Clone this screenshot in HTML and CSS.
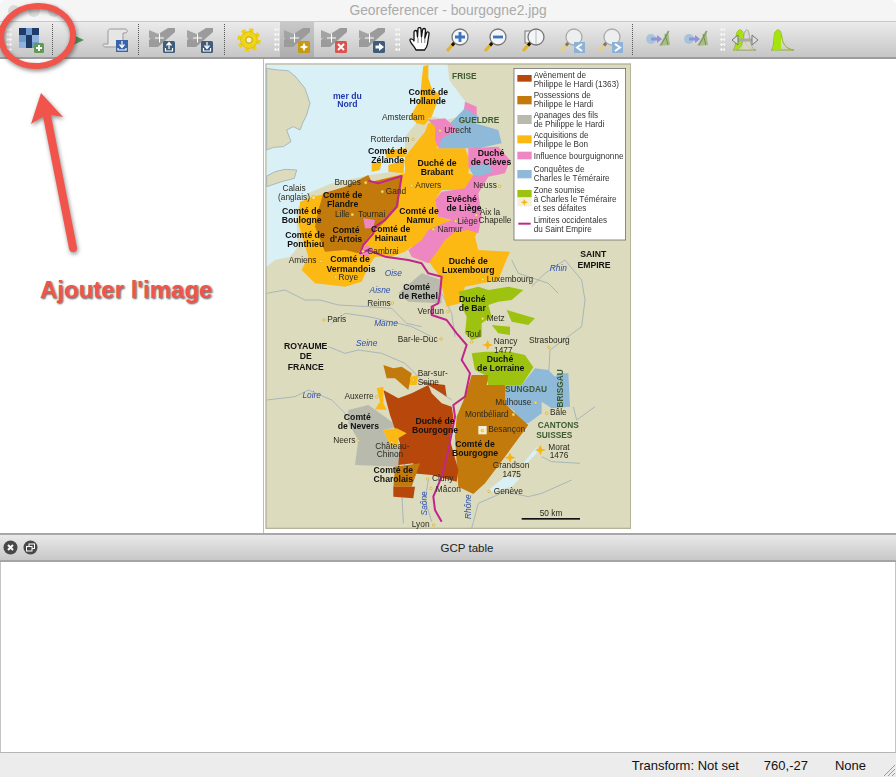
FILE: index.html
```html
<!DOCTYPE html>
<html lang="en">
<head>
    <meta charset="UTF-8">
    <title>Georeferencer - bourgogne2.jpg</title>
    <link rel="stylesheet" href="styles.css">
</head>
<body>

<svg class="defs" width="0" height="0">
    <symbol id="gcp" viewBox="0 0 26 26">
        <polygon points="0,20 0,13 19,1 26,1 26,5 9,20" fill="#9b9b9b"/>
        <polygon points="0,3 14,9 7,14 0,11" fill="#a3a3a3"/>
        <path d="M10.5 6.5v9M6 11h9" stroke="#fff" stroke-width="1"/>
    </symbol>
    <symbol id="lens" viewBox="0 0 26 26">
        <path d="M2 24l7-8" stroke="#e2b52c" stroke-width="3.4"/>
        <path d="M7 18.500l3-3.500" stroke="#111" stroke-width="3"/>
        <circle cx="15" cy="10" r="8" fill="#f3f5f8" stroke="#777" stroke-width="1.300"/>
    </symbol>
    <symbol id="lens-dim" viewBox="0 0 26 26">
        <path d="M2 24l7-8" stroke="#e6cf85" stroke-width="3.4"/>
        <path d="M7 18.500l3-3.500" stroke="#777" stroke-width="3"/>
        <circle cx="15" cy="10" r="8" fill="#eceef0" stroke="#aaa" stroke-width="1.300"/>
    </symbol>
    <symbol id="scale" viewBox="0 0 26 26">
        <circle cx="6" cy="12" r="5" fill="#a9c4d8"/>
        <path d="M6 12h8" stroke="#8f92dc" stroke-width="3"/>
        <polygon points="12,8 17,12 12,16" fill="#8f92dc"/>
        <polygon points="23,3 25,18 14,19" fill="#a9bd84"/>
        <path d="M24 4l-8 14M20 7l3 11" stroke="#6f8f5a" stroke-width="1"/>
    </symbol>
    <symbol id="hist" viewBox="0 0 26 26">
        <path d="M1 23c2-1 2-3 3-10 0-6 1-10 4-10 3 0 3 3 4 8 1 6 4 11 12 12z" fill="none" stroke="#8fb01c" stroke-width="1"/>
        <path d="M2 23c1-1 2-3 2-10 0-6 1-10 4-10 2 0 3 2 3 6v14z" fill="#a4e30c"/>
    </symbol>
</svg>

<div class="window">
    <div class="titlebar">
        <span class="light"></span><span class="light"></span><span class="light"></span>
        <span class="wintitle">Georeferencer - bourgogne2.jpg</span>
    </div>

    <div class="toolbar">
        <span class="grip"></span>
        <span class="tool">
            <svg width="28" height="26" viewBox="0 0 28 26">
                <rect x="2" y="1" width="20" height="20" fill="#6e9ace"/>
                <rect x="2" y="1" width="7" height="7" fill="#1f3a66"/>
                <rect x="15" y="1" width="7" height="7" fill="#1f3a66"/>
                <rect x="9" y="8" width="6" height="7" fill="#1f3a66"/>
                <rect x="2" y="15" width="7" height="6" fill="#8fb2dc"/>
                <rect x="9" y="15" width="6" height="6" fill="#1f3a66"/>
                <rect x="15" y="8" width="7" height="7" fill="#8fb2dc"/>
                <rect x="17" y="16" width="10" height="10" rx="1.500" fill="#5f9b52"/>
                <path d="M22 18v6M19 21h6" stroke="#fff" stroke-width="2"/>
            </svg>
        </span>
        <span class="sep sep-first"></span>
        <span class="tool">
            <svg width="16" height="14" viewBox="0 0 16 14"><polygon points="2,1 15,7 2,13" fill="#4c9150"/></svg>
        </span>
        <span class="tool">
            <svg width="26" height="24" viewBox="0 0 26 24">
                <path d="M6 4c0-3 2-3 3-3h14c3 0 3 4 0 4h-2v14H4c-4 0-4-3-1-3h3z" fill="#e6e6e6" stroke="#999"/>
                <rect x="14" y="12" width="12" height="12" fill="#3a64a8"/>
                <path d="M20 13v6M17.500 16.500l2.500 3 2.500-3M16 20v2h8v-2" stroke="#fff" stroke-width="1.200" fill="none"/>
            </svg>
        </span>
        <span class="sep"></span>
        <span class="tool">
            <svg width="26" height="26" viewBox="0 0 26 26">
                <use href="#gcp"/>
                <rect x="14" y="14" width="12" height="12" rx="1.500" fill="#3f5d7b"/>
                <path d="M20 22v-6M17.500 18.500l2.500-3 2.500 3M16.500 21v3h7v-3" stroke="#fff" stroke-width="1.200" fill="none"/>
            </svg>
        </span>
        <span class="tool">
            <svg width="26" height="26" viewBox="0 0 26 26">
                <use href="#gcp"/>
                <rect x="14" y="14" width="12" height="12" rx="1.500" fill="#3f5d7b"/>
                <path d="M20 15v6M17.500 18.500l2.500 3 2.500-3M16.500 21v3h7v-3" stroke="#fff" stroke-width="1.200" fill="none"/>
            </svg>
        </span>
        <span class="sep sep-wide"></span>
        <span class="tool">
            <svg width="24" height="24" viewBox="0 0 24 24">
                <circle cx="12" cy="12" r="9.500" fill="none" stroke="#ecd012" stroke-width="4.400" stroke-dasharray="3.900 3.560"/>
                <circle cx="12" cy="12" r="8.400" fill="#efd614" stroke="#dba90c" stroke-width=".6"/>
                <circle cx="12" cy="12" r="3.200" fill="#fdf8cf" stroke="#c8970e"/>
            </svg>
        </span>
        <span class="grip grip-gear"></span>
        <span class="tool tool-active">
            <svg width="26" height="26" viewBox="0 0 26 26">
                <use href="#gcp"/>
                <rect x="14" y="14" width="12" height="12" rx="1.500" fill="#c79a14"/>
                <polygon points="20,15.500 21.300,18.700 24.500,20 21.300,21.300 20,24.500 18.700,21.300 15.500,20 18.700,18.700" fill="#fff"/>
            </svg>
        </span>
        <span class="tool tool-next">
            <svg width="26" height="26" viewBox="0 0 26 26">
                <use href="#gcp"/>
                <rect x="14" y="14" width="12" height="12" rx="1.500" fill="#d9534f"/>
                <path d="M17 17l6 6M23 17l-6 6" stroke="#fff" stroke-width="2"/>
            </svg>
        </span>
        <span class="tool">
            <svg width="26" height="26" viewBox="0 0 26 26">
                <use href="#gcp"/>
                <rect x="14" y="14" width="12" height="12" rx="1.500" fill="#3f5d7b"/>
                <path d="M16.500 20h5" stroke="#fff" stroke-width="3"/>
                <polygon points="20,16 25,20 20,24" fill="#fff"/>
            </svg>
        </span>
        <span class="grip grip-hand"></span>
        <span class="tool">
            <svg width="24" height="25" viewBox="0 0 24 25">
                <path d="M8 23c-1-3-6-7-6-10 0-2 3-1 4 1L6 5c0-2 3-2 3 0l.5 5 .5-8c0-2 3-2 3 0l.5 8 1-7c.3-2 3-2 3 0l-.7 8 1.700-5c.6-2 3-1 2.500 1l-1.500 10c-.5 3-2 5-3 6z" fill="#fff" stroke="#111" stroke-width="1.300" stroke-linejoin="round"/>
                <path d="M10 11v5M13.500 11v5M16.800 11v5" stroke="#555" stroke-width=".7"/>
            </svg>
        </span>
        <span class="tool">
            <svg width="26" height="26" viewBox="0 0 26 26">
                <use href="#lens"/>
                <path d="M15 5v10M10 10h10" stroke="#3f74b8" stroke-width="2.800"/>
            </svg>
        </span>
        <span class="tool">
            <svg width="26" height="26" viewBox="0 0 26 26">
                <use href="#lens"/>
                <path d="M10 10h10" stroke="#3f74b8" stroke-width="2.800"/>
            </svg>
        </span>
        <span class="tool">
            <svg width="26" height="26" viewBox="0 0 26 26">
                <rect x="4" y="4" width="13" height="12" fill="#f0f0f0" stroke="#777"/>
                <use href="#lens"/>
                <path d="M15 3v14" stroke="#bbb"/>
            </svg>
        </span>
        <span class="tool">
            <svg width="26" height="26" viewBox="0 0 26 26">
                <use href="#lens-dim"/>
                <rect x="15" y="15" width="11" height="11" fill="#8db2d6"/>
                <path d="M23 17l-5 3.500 5 3.500" stroke="#fff" stroke-width="2" fill="none"/>
            </svg>
        </span>
        <span class="tool">
            <svg width="26" height="26" viewBox="0 0 26 26">
                <use href="#lens-dim"/>
                <rect x="15" y="15" width="11" height="11" fill="#8db2d6"/>
                <path d="M18 17l5 3.500-5 3.500" stroke="#fff" stroke-width="2" fill="none"/>
            </svg>
        </span>
        <span class="sep sep-scale"></span>
        <span class="tool"><svg width="26" height="26" viewBox="0 0 26 26"><use href="#scale"/></svg></span>
        <span class="tool"><svg width="26" height="26" viewBox="0 0 26 26"><use href="#scale"/></svg></span>
        <span class="grip grip-hist"></span>
        <span class="tool">
            <svg width="26" height="26" viewBox="0 0 26 26">
                <use href="#hist"/>
                <path d="M15 3c-3 0-3 6-4 10-1 5-3 9-7 10h20c-4-1-5-5-6-10-1-5-1-10-3-10z" fill="#d8d8c8" fill-opacity=".7" stroke="#a8a898"/>
                <path d="M4 13h18" stroke="#aaa" stroke-width="3"/>
                <polygon points="0,13 6,8 6,18" fill="#ddd" stroke="#777"/>
                <polygon points="26,13 20,8 20,18" fill="#ddd" stroke="#777"/>
            </svg>
        </span>
        <span class="tool"><svg width="26" height="26" viewBox="0 0 26 26"><use href="#hist"/></svg></span>
    </div>

    <div class="canvas">
        <div class="side"></div>
        <div class="map-pane">
            <svg class="map" width="366" height="469" viewBox="0 0 1098 1407">
                <rect x="3" y="12" width="1094" height="1393" fill="#dddbbd" stroke="#b5b398" stroke-width="4"/>

                <polygon class="sea" points="5,14 548,14 553,60 575,90 605,130 585,170 540,180 510,170 470,170 420,230 420,330 315,345 200,370 130,400 95,450 95,500 100,560 75,590 30,600 5,620"/>
                <polygon class="shore" points="5,25 40,30 70,32 90,48 120,85 135,130 125,165 115,185 105,210 85,200 65,210 78,245 55,260 25,262 5,270"/>
                <polygon class="shore" points="5,348 30,335 60,328 95,330 88,355 50,365 5,380"/>

                <polyline class="river" points="5,700 60,690 120,720 165,720 220,735 310,740 380,745 425,790 470,800"/>
                <polyline class="river" points="200,790 240,760 310,770 400,790 440,800 500,830"/>
                <polyline class="river" points="190,860 240,880 280,870 350,880 420,910 470,960 560,1020"/>
                <polyline class="river" points="5,1020 90,1010 130,990 200,1020 240,1060 270,1100"/>
                <polyline class="river" points="420,1200 410,1290 415,1390"/>
                <polyline class="river" points="490,1260 480,1320 500,1385"/>
                <polyline class="river" points="620,1405 640,1330 720,1295 790,1310 830,1300 920,1260"/>
                <polyline class="river" points="830,1190 860,1205 945,1210"/>
                <polyline class="river" points="925,1040 935,1080 990,1040"/>
                <polyline class="river" points="800,680 840,640 900,600 950,660 960,720 950,800 855,870 850,960"/>
                <polyline class="river" points="740,600 760,640 850,670 880,700"/>
                <polyline class="river" points="530,700 560,760 570,830"/>

                <polygon class="yellow" points="475,18 490,15 490,55 500,85 525,105 500,170 478,195 455,190 435,170 465,120 470,60"/>
                <polygon class="yellow" points="490,190 520,180 530,210 515,265 600,265 615,300 610,340 640,350 600,390 530,390 510,420 520,470 555,480 600,470 640,510 630,530 640,570 735,575 720,610 700,660 600,680 585,730 545,740 535,700 525,650 495,610 440,590 440,560 420,575 380,590 330,590 310,620 290,665 240,680 150,670 110,630 130,590 100,490 105,425 145,410 420,340 420,290 480,215"/>
                <polygon class="yellow" points="320,310 350,305 345,330 320,335"/>
                <polygon class="yellow" points="360,270 425,265 420,290 365,295"/>
                <polygon class="yellow" points="370,315 420,300 415,340 370,335"/>
                <polygon class="brown" points="175,400 240,380 310,345 320,365 410,345 400,440 355,490 320,520 300,545 280,580 240,570 180,575 150,500 160,450"/>
                <polygon class="pink" points="490,180 540,175 580,210 540,235 520,265 510,240 510,200"/>
                <polygon class="pink" points="600,125 635,140 635,180 625,210 590,200"/>
                <polygon class="blue" points="600,145 640,170 630,190 700,210 710,250 640,265 600,265 520,265 530,235 580,210 555,190"/>
                <polygon class="pink" points="610,265 700,260 735,300 720,340 670,350 640,400 650,470 640,520 610,510 570,515 540,540 520,570 490,610 440,590 430,570 470,540 490,510 510,500 560,480 520,470 510,420 530,395 600,385 625,345 610,320"/>
                <polygon class="blue" points="612,320 670,310 685,335 640,350 625,345"/>
                <polygon class="pink" points="295,475 330,480 325,505 300,505"/>
                <polygon class="pink" points="285,570 305,555 325,565 310,590 285,585"/>

                <polygon class="gray" points="400,700 470,640 530,660 530,730 430,725"/>
                <polygon class="green" points="580,695 640,680 670,690 730,680 775,690 740,720 700,725 670,735 680,770 650,790 650,830 620,840 600,820 605,770 590,740 590,715"/>
                <polygon class="green" points="725,750 810,775 790,795 740,785"/>
                <polygon class="green" points="680,795 735,800 735,825 700,820"/>
                <polygon class="green" points="620,880 660,875 735,875 780,885 805,922 770,975 670,975 660,945 630,930"/>
                <polygon class="blue" points="720,975 770,975 810,925 850,930 870,950 880,940 910,940 915,1040 860,1045 830,1025 830,1060 790,1090 745,1085 750,1055 720,1030"/>
                <polygon class="gray" points="250,1050 310,1035 360,1070 400,1100 355,1110 375,1155 400,1160 405,1220 270,1215 280,1140 250,1090"/>
                <polygon class="brown" points="355,915 385,925 410,920 440,940 430,990 390,955 365,955"/>
                <polygon class="brown" points="620,945 670,945 665,975 720,975 720,1030 750,1060 790,1095 720,1190 660,1270 625,1302 580,1280 575,1210 570,1130 575,1070 600,1010"/>
                <polygon class="rust" points="355,990 400,1015 440,1000 490,975 500,1000 530,1030 560,1040 565,1070 555,1140 580,1230 575,1265 500,1245 440,1240 445,1210 400,1215 405,1150 375,1065"/>
                <polygon class="rust" points="460,965 540,975 545,1010 530,1000 490,975"/>
                <polygon class="brown" points="390,1220 465,1210 440,1280 385,1280"/>
                <polygon class="rust" points="385,1280 450,1280 445,1315 385,1310"/>
                <polygon class="yellow" points="435,950 460,945 455,975 435,975"/>
                <polygon class="yellow" points="335,985 355,980 355,1030 365,1050 330,1048 345,1025"/>
                <polygon class="yellow" points="355,1110 395,1105 425,1120 400,1135 400,1160 375,1155"/>
                <rect x="640" y="1098" width="25" height="25" fill="#f3efd8"/>
                <polygon class="sea" points="670,1290 720,1250 765,1255 740,1280 680,1295"/>
                <polygon class="sea" points="775,1210 815,1160 815,1180 785,1210"/>

                <polyline class="border" points="310,362 340,370 410,348 395,440 360,480 330,500 325,520 295,555 285,580 310,570 360,590 430,600 470,610 490,640 530,650 525,700 520,730 500,740 500,765 545,780 575,820 605,855 590,900 615,940 600,1010 565,1035 570,1070 550,1170 530,1250 505,1310 510,1350 530,1385"/>

                <polygon class="star" points="668,840 673,851 685,855 673,859 668,870 663,859 651,855 663,851"/>
                <polygon class="star" points="735,1178 740,1189 752,1193 740,1197 735,1208 730,1197 718,1193 730,1189"/>
                <polygon class="star" points="826,1155 831,1166 843,1170 831,1174 826,1185 821,1174 809,1170 821,1166"/>

                <g class="town">
                    <circle cx="492" cy="175" r="4"/><circle cx="525" cy="212" r="4"/><circle cx="444" cy="238" r="4"/>
                    <circle cx="302" cy="368" r="4"/><circle cx="352" cy="395" r="4"/><circle cx="440" cy="377" r="4"/>
                    <circle cx="704" cy="379" r="4"/><circle cx="146" cy="413" r="6"/><circle cx="262" cy="464" r="4"/>
                    <circle cx="634" cy="466" r="4"/><circle cx="572" cy="483" r="4"/><circle cx="505" cy="508" r="4"/>
                    <circle cx="294" cy="574" r="4"/><circle cx="168" cy="604" r="4"/><circle cx="212" cy="651" r="4"/>
                    <circle cx="653" cy="658" r="4"/><circle cx="382" cy="729" r="4"/><circle cx="548" cy="755" r="4"/>
                    <circle cx="653" cy="776" r="4"/><circle cx="177" cy="780" r="4"/><circle cx="528" cy="837" r="4"/>
                    <circle cx="620" cy="846" r="4"/><circle cx="852" cy="862" r="4"/><circle cx="445" cy="960" r="4"/>
                    <circle cx="335" cy="1010" r="4"/><circle cx="812" cy="1028" r="4"/><circle cx="745" cy="1064" r="4"/>
                    <circle cx="845" cy="1060" r="4"/><circle cx="652" cy="1112" r="4"/><circle cx="280" cy="1142" r="4"/>
                    <circle cx="380" cy="1147" r="4"/><circle cx="488" cy="1257" r="4"/><circle cx="498" cy="1285" r="4"/>
                    <circle cx="672" cy="1294" r="4"/><circle cx="506" cy="1395" r="4"/>
                </g>

                <g class="labels-b">
                    <text x="490" y="106">Comté de</text><text x="488" y="133">Hollande</text>
                    <text x="368" y="283">Comté de</text><text x="368" y="310">Zélande</text>
                    <text x="516" y="318">Duché de</text><text x="516" y="345">Brabant</text>
                    <text x="678" y="288">Duché</text><text x="678" y="315">de Clèves</text>
                    <text x="233" y="413">Comté de</text><text x="233" y="440">Flandre</text>
                    <text x="590" y="425">Evêché</text><text x="597" y="452">de Liège</text>
                    <text x="462" y="463">Comté de</text><text x="466" y="490">Namur</text>
                    <text x="110" y="463">Comté de</text><text x="110" y="490">Boulogne</text>
                    <text x="243" y="518">Comté</text><text x="243" y="545">d'Artois</text>
                    <text x="377" y="516">Comté de</text><text x="377" y="543">Hainaut</text>
                    <text x="120" y="535">Comté de</text><text x="122" y="562">Ponthieu</text>
                    <text x="255" y="607">Comté de</text><text x="258" y="635">Vermandois</text>
                    <text x="610" y="613">Duché de</text><text x="610" y="640">Luxembourg</text>
                    <text x="455" y="689">Comté</text><text x="460" y="716">de Rethel</text>
                    <text x="622" y="725">Duché</text><text x="622" y="753">de Bar</text>
                    <text x="705" y="905">Duché</text><text x="707" y="932">de Lorraine</text>
                    <text x="277" y="1080">Comté</text><text x="280" y="1107">de Nevers</text>
                    <text x="510" y="1092">Duché de</text><text x="510" y="1119">Bourgogne</text>
                    <text x="630" y="1162">Comté de</text><text x="630" y="1189">Bourgogne</text>
                    <text x="385" y="1240">Comté de</text><text x="385" y="1267">Charolais</text>
                    <text x="985" y="590">SAINT</text><text x="987" y="623">EMPIRE</text>
                    <text x="122" y="867">ROYAUME</text><text x="122" y="898">DE</text><text x="122" y="930">FRANCE</text>
                </g>

                <g class="labels-r">
                    <text x="415" y="180">Amsterdam</text><text x="578" y="220">Utrecht</text><text x="375" y="245">Rotterdam</text>
                    <text x="248" y="375">Bruges</text><text x="393" y="401">Gand</text><text x="490" y="383">Anvers</text>
                    <text x="660" y="385">Neuss</text><text x="87" y="393">Calais</text><text x="87" y="419">(anglais)</text>
                    <text x="675" y="464">Aix la</text><text x="690" y="490">Chapelle</text><text x="232" y="470">Lille</text>
                    <text x="320" y="470">Tournai</text><text x="608" y="492">Liège</text><text x="555" y="515">Namur</text>
                    <text x="354" y="582">Cambrai</text><text x="113" y="610">Amiens</text><text x="250" y="660">Roye</text>
                    <text x="735" y="665">Luxembourg</text><text x="342" y="737">Reims</text><text x="497" y="762">Verdun</text>
                    <text x="692" y="782">Metz</text><text x="215" y="787">Paris</text><text x="625" y="830">Toul</text>
                    <text x="722" y="853">Nancy</text><text x="715" y="880">1477</text><text x="853" y="850">Strasbourg</text>
                    <text x="458" y="845">Bar-le-Duc</text><text x="503" y="949">Bar-sur-</text><text x="490" y="975">Seine</text>
                    <text x="282" y="1017">Auxerre</text><text x="745" y="1035">Mulhouse</text><text x="665" y="1070">Montbéliard</text>
                    <text x="880" y="1066">Bâle</text><text x="725" y="1117">Besançon</text><text x="238" y="1148">Neers</text>
                    <text x="382" y="1167">Château-</text><text x="375" y="1192">Chinon</text><text x="882" y="1170">Morat</text>
                    <text x="882" y="1195">1476</text><text x="738" y="1223">Grandson</text><text x="740" y="1250">1475</text>
                    <text x="533" y="1262">Cluny</text><text x="550" y="1295">Mâcon</text><text x="730" y="1302">Genève</text>
                    <text x="858" y="1367">50 km</text><text x="467" y="1400">Lyon</text>
                </g>

                <g class="labels-g">
                    <text x="598" y="58">FRISE</text><text x="642" y="190">GUELDRE</text><text x="783" y="995">SUNGDAU</text>
                    <text x="880" y="1105">CANTONS</text><text x="868" y="1135">SUISSES</text>
                    <text x="895" y="985" transform="rotate(-90 895 985)">BRISGAU</text>
                </g>

                <g class="labels-w">
                    <text x="880" y="632">Rhin</text><text x="385" y="647">Oise</text><text x="345" y="700">Aisne</text>
                    <text x="363" y="797">Marne</text><text x="305" y="857">Seine</text><text x="140" y="1015">Loire</text>
                    <text x="486" y="1330" transform="rotate(-90 486 1330)">Saône</text>
                    <text x="618" y="1340" transform="rotate(-90 618 1340)">Rhône</text>
                </g>
                <g class="labels-sea"><text x="247" y="117">mer du</text><text x="247" y="142">Nord</text></g>

                <rect x="770" y="1374" width="175" height="5" fill="#111"/>

                <rect x="747" y="25" width="335" height="515" fill="#fff" stroke="#555" stroke-width="2"/>
                <rect class="rust" x="757" y="45" width="43" height="20"/>
                <rect class="brown" x="757" y="108" width="43" height="25"/>
                <rect class="gray" x="757" y="165" width="43" height="27"/>
                <rect class="yellow" x="757" y="226" width="43" height="24"/>
                <rect class="pink" x="757" y="275" width="43" height="23"/>
                <rect class="blue" x="757" y="330" width="43" height="25"/>
                <rect class="green" x="757" y="390" width="43" height="22"/>
                <rect x="757" y="414" width="43" height="25" fill="#f3efd8"/>
                <polygon class="star" points="778,417 781,424 789,427 781,430 778,437 775,430 767,427 775,424"/>
                <rect x="760" y="488" width="37" height="6" fill="#c0268c"/>
                <g class="legend">
                    <text x="806" y="53">Avènement de</text><text x="806" y="80">Philippe le Hardi (1363)</text>
                    <text x="806" y="115">Possessions de</text><text x="806" y="142">Philippe le Hardi</text>
                    <text x="806" y="175">Apanages des fils</text><text x="806" y="200">de Philippe le Hardi</text>
                    <text x="806" y="235">Acquisitions de</text><text x="806" y="262">Philippe le Bon</text>
                    <text x="806" y="297">Influence bourguignonne</text>
                    <text x="806" y="337">Conquêtes de</text><text x="806" y="362">Charles le Téméraire</text>
                    <text x="806" y="400">Zone soumise</text><text x="806" y="425">à Charles le Téméraire</text><text x="806" y="452">et ses défaites</text>
                    <text x="806" y="490">Limites occidentales</text><text x="806" y="515">du Saint Empire</text>
                </g>
            </svg>
        </div>
    </div>

    <div class="dock-head">
        <span class="dock-btn">
            <svg width="15" height="15" viewBox="0 0 15 15"><circle cx="7.500" cy="7.500" r="7" fill="#484848"/><path d="M5 5l5 5M10 5l-5 5" stroke="#fff" stroke-width="2"/></svg>
        </span>
        <span class="dock-btn">
            <svg width="15" height="15" viewBox="0 0 15 15"><circle cx="7.500" cy="7.500" r="7" fill="#484848"/><rect x="6" y="4" width="5.500" height="4.500" fill="none" stroke="#fff"/><rect x="3.500" y="6.500" width="5.500" height="4.500" fill="#484848" stroke="#fff"/></svg>
        </span>
        <span class="dock-title">GCP table</span>
    </div>
    <div class="gcp-table"></div>

    <div class="statusbar">
        <span class="st-transform">Transform: Not set</span>
        <span class="st-coord">760,-27</span>
        <span class="st-crs">None</span>
        <svg class="sizegrip" width="12" height="12" viewBox="0 0 12 12"><path d="M1 12L12 1M5 12l7-7M9 12l3-3" stroke="#999"/></svg>
    </div>
</div>

<svg class="annot" width="896" height="777" viewBox="0 0 896 777">
    <ellipse cx="37" cy="36" rx="36" ry="30" transform="rotate(-5 37 36)" fill="none" stroke="#f1544b" stroke-width="6"/>
    <path d="M73 248L47 116" fill="none" stroke="#f1544b" stroke-width="8" stroke-linecap="round"/>
    <polygon points="41,93 63,117 47,114 31,124" fill="#f1544b"/>
</svg>
<div class="note">Ajouter l'image</div>

</body>
</html>
```

FILE: styles.css
```css
body {
    margin: 0;
    background-color: #fff;
    font-family: "Liberation Sans", Arial, sans-serif;
    overflow: hidden;
}

.defs {
    position: absolute;
}

.window {
    width: 896px;
    height: 777px;
    display: flex;
    flex-direction: column;
}

/* title bar */
.titlebar {
    height: 22px;
    flex: none;
    display: flex;
    align-items: center;
    gap: 8px;
    padding-left: 8px;
    box-sizing: border-box;
    background-color: #f5f5f5;
    border-bottom: 1px solid #c9c9c9;
    border-radius: 5px 5px 0 0;
    position: relative;
}

.light {
    width: 12px;
    height: 12px;
    border-radius: 50%;
    background-color: #dcdcdc;
}

.wintitle {
    position: absolute;
    left: 0;
    right: 0;
    text-align: center;
    font-size: 13.800px;
    color: #aaa;
}

/* toolbar */
.toolbar {
    height: 37px;
    flex: none;
    display: flex;
    box-sizing: border-box;
    padding-left: 6px;
    background: linear-gradient(#ebebeb, #c6c6c6);
    border-bottom: 2px solid #9c9c9c;
}

.tool {
    width: 38px;
    flex: none;
    display: flex;
    align-items: center;
    justify-content: center;
}

.tool-active {
    width: 34px;
    background: linear-gradient(#c9c9c9, #aeaeae);
}

.tool-next {
    margin-left: 1px;
}

.grip {
    width: 6px;
    flex: none;
    margin: 5px 0 4px;
    background-image: radial-gradient(circle, #f4f4f4 1px, transparent 1.500px);
    background-size: 3px 5px;
}

.grip-gear {
    width: 5px;
    margin-left: 6px;
    margin-right: 1px;
}

.grip-hand {
    width: 5px;
    margin-left: 4px;
    margin-right: 1px;
}

.grip-hist {
    width: 5px;
    margin-left: 5px;
    margin-right: 1px;
}

.sep {
    width: 0;
    flex: none;
    margin: 2px 4px;
    border-left: 1px dotted #555;
}

.sep-first {
    margin-left: 2px;
    margin-right: 5px;
}

.sep-wide {
    margin-left: 5px;
    margin-right: 5px;
}

.sep-scale {
    margin-left: 3px;
    margin-right: 6px;
}

/* map canvas */
.canvas {
    height: 474px;
    flex: none;
    display: flex;
    background-color: #fff;
    border-bottom: 2px solid #a8a8a8;
}

.side {
    width: 263px;
    flex: none;
    border-right: 1px solid #bdbdbd;
}

.map-pane {
    flex: 1;
    padding: 1px 0 0 1px;
}

.map {
    display: block;
    filter: blur(0.35px);
}

.sea { fill: #d9f0f7; }
.shore { fill: #dddbbd; stroke: #8ea3ad; stroke-width: 2; }
.river { fill: none; stroke: #8ea3b5; stroke-width: 2; }
.yellow { fill: #fdb913; }
.brown { fill: #c27a0c; }
.rust { fill: #b8470c; }
.gray { fill: #b9baae; }
.pink { fill: #ee86c2; }
.blue { fill: #8fb9d9; }
.green { fill: #9dc310; }
.border { fill: none; stroke: #c0268c; stroke-width: 6; stroke-linejoin: round; }
.star { fill: #f6b415; }
.town circle { fill: #fbe27a; stroke: #c9a020; stroke-width: 1.500; }

.labels-b text,
.labels-r text,
.labels-g text,
.labels-w text,
.labels-sea text {
    text-anchor: middle;
}

.labels-b { font-size: 26px; font-weight: bold; fill: #111; }
.labels-r { font-size: 25px; fill: #2a2a20; }
.labels-g { font-size: 25px; font-weight: bold; fill: #3c5a32; }
.labels-w { font-size: 25px; font-style: italic; fill: #2a4fb0; }
.labels-sea { font-size: 26px; font-weight: bold; fill: #2038b0; }
.legend { font-size: 24.500px; fill: #333; }

/* dock */
.dock-head {
    height: 27px;
    flex: none;
    display: flex;
    align-items: center;
    gap: 5px;
    box-sizing: border-box;
    padding-left: 3px;
    background: linear-gradient(#e9e9e9, #c8c8c8);
    border-bottom: 2px solid #a5a5a5;
    position: relative;
}

.dock-btn {
    display: flex;
}

.dock-title {
    position: absolute;
    left: 38px;
    right: 0;
    text-align: center;
    font-size: 11.500px;
    color: #222;
}

.gcp-table {
    flex: 1;
    background-color: #fff;
    border-left: 1px solid #c4c4c4;
    border-right: 1px solid #c4c4c4;
    border-bottom: 1px solid #b4b4b4;
}

/* status bar */
.statusbar {
    height: 24px;
    flex: none;
    display: flex;
    align-items: center;
    justify-content: flex-end;
    padding-right: 30px;
    background-color: #ececec;
    font-size: 13px;
    color: #111;
    position: relative;
}

.st-coord {
    margin-left: 25px;
}

.st-crs {
    margin-left: 27px;
}

.sizegrip {
    position: absolute;
    right: 1px;
    bottom: 1px;
}

/* red annotation on top of the screenshot */
.annot {
    position: absolute;
    left: 0;
    top: 0;
    filter: drop-shadow(1px 2px 2px rgba(60, 60, 60, 0.6));
}

.note {
    position: absolute;
    left: 40px;
    top: 276px;
    font-size: 24px;
    font-weight: bold;
    color: #f1544b;
    text-shadow: 1px 1px 2px #555;
}
```
